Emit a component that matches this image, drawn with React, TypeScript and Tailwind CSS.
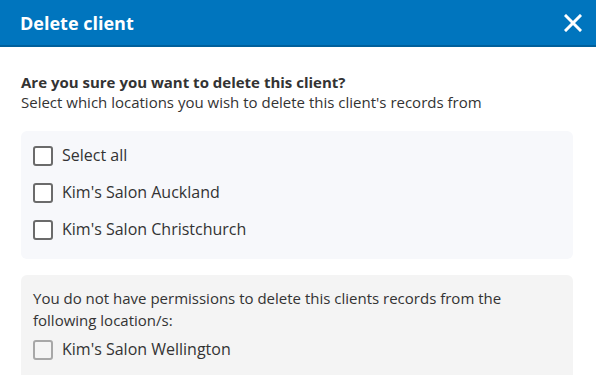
import React from "react";

function Box({ disabled }: { disabled?: boolean }) {
  return (
    <span
      className={
        "inline-block w-[20px] h-[20px] rounded-[3px] border-2 shrink-0 " +
        (disabled ? "border-[#a8a8a8] bg-[#f5f5f5]" : "border-[#6b6b6b] bg-white")
      }
    />
  );
}

export default function App() {
  const rows = ["Select all", "Kim's Salon Auckland", "Kim's Salon Christchurch"];
  return (
    <div className="w-[596px] h-[375px] overflow-hidden bg-white text-[#333] font-['Open_Sans',sans-serif]">
      <div className="h-[47px] bg-[#0075be] border-b-2 border-[#00609c] flex items-center justify-between pl-[20px] pr-[14px]">
        <span className="text-white font-bold text-[18px] leading-none">Delete client</span>
        <svg width="18" height="18" viewBox="0 0 18 18">
          <path d="M2 2 L16 16 M16 2 L2 16" stroke="white" strokeWidth="3" strokeLinecap="square" />
        </svg>
      </div>
      <div className="px-[21px] pt-[25px]">
        <div className="font-bold text-[15px] leading-[20px]">Are you sure you want to delete this client?</div>
        <div className="text-[15px] leading-[20px]">Select which locations you wish to delete this client's records from</div>
        <div className="mt-[19px] w-[552px] bg-[#f7f8fb] rounded-[6px] pl-[12px] pt-[14px] pb-[19px] flex flex-col gap-[16px]">
          {rows.map((r) => (
            <label key={r} className="flex items-center gap-[9px] text-[16px] leading-[21px] text-[#333]">
              <Box />
              <span>{r}</span>
            </label>
          ))}
        </div>
        <div className="mt-[16px] w-[552px] h-[120px] bg-[#f4f4f4] rounded-[6px] pl-[12px] pt-[12px]">
          <div className="text-[15px] leading-[22px] w-[500px]">
            You do not have permissions to delete this clients records from the following location/s:
          </div>
          <label className="mt-[8px] flex items-center gap-[9px] text-[16px] leading-[21px]">
            <Box disabled />
            <span>Kim's Salon Wellington</span>
          </label>
        </div>
      </div>
    </div>
  );
}
